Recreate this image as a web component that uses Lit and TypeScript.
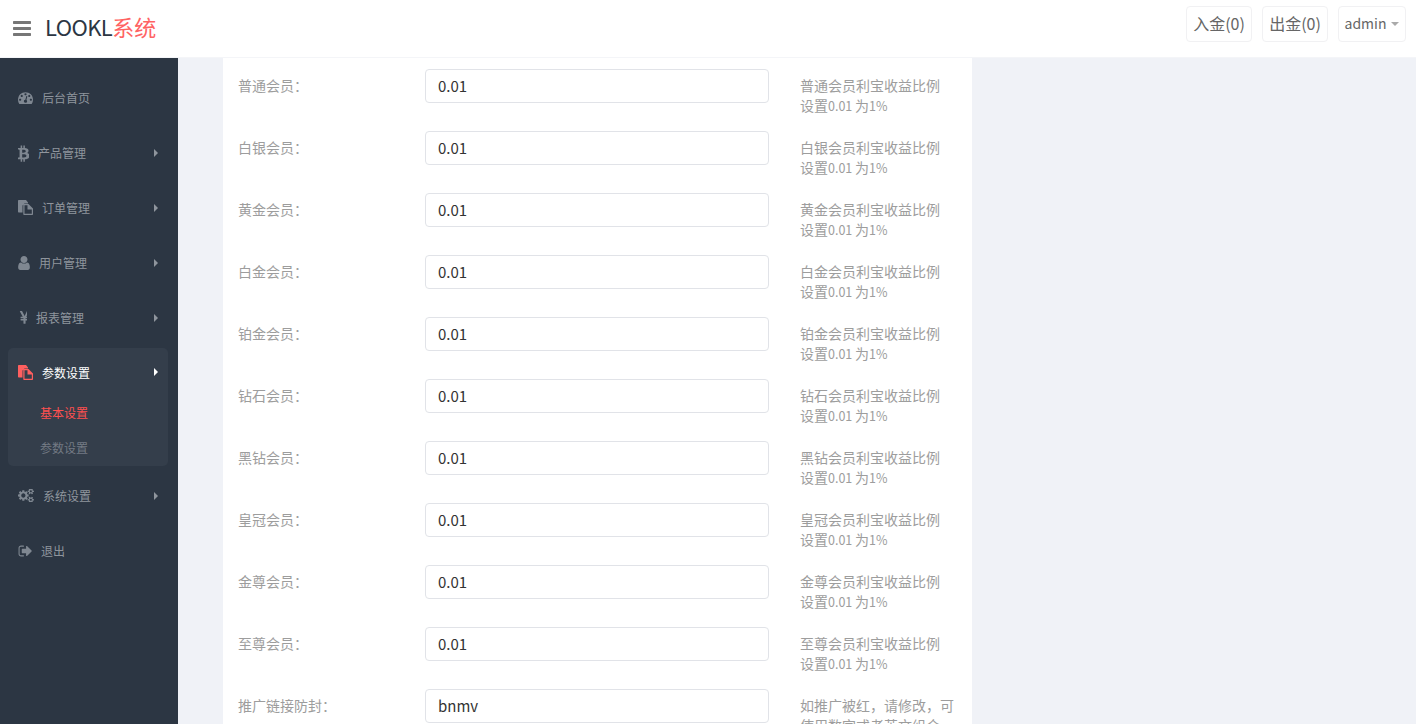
import { LitElement, html, css, svg } from 'lit';
import { customElement } from 'lit/decorators.js';
import { classMap } from 'lit/directives/class-map.js';

const icons: Record<string, { w: number; box: string; d: string }> = {
  dashboard: { w: 15, box: '0 128 1792 1536', d: 'M384 1152q0-53-37.5-90.5t-90.5-37.5-90.5 37.5-37.5 90.5 37.5 90.5 90.5 37.5 90.5-37.5 37.5-90.5zm192-448q0-53-37.5-90.5t-90.5-37.5-90.5 37.5-37.5 90.5 37.5 90.5 90.5 37.5 90.5-37.5 37.5-90.5zm428 481l101-382q6-26-7.5-48.5t-38.5-29.5-48 6.5-30 39.5l-101 382q-60 5-107 43.5t-63 98.5q-20 77 20 146t117 89 146-20 89-117q16-60-6-117t-72-91zm660-33q0-53-37.5-90.5t-90.5-37.5-90.5 37.5-37.5 90.5 37.5 90.5 90.5 37.5 90.5-37.5 37.5-90.5zm-640-640q0-53-37.5-90.5t-90.5-37.5-90.5 37.5-37.5 90.5 37.5 90.5 90.5 37.5 90.5-37.5 37.5-90.5zm448 192q0-53-37.5-90.5t-90.5-37.5-90.5 37.5-37.5 90.5 37.5 90.5 90.5 37.5 90.5-37.5 37.5-90.5zm320 448q0 261-141 483-19 29-54 29h-1402q-35 0-54-29-141-221-141-483 0-182 71-348t191-286 286-191 348-71 348 71 286 191 191 286 71 348z' },
  btc: { w: 11, box: '96 0 1120 1792', d: 'M1167 640q18 182-131 258 117 28 175 103t45 214q-7 71-32.5 125t-64.5 89-97 58.5-121.5 34.5-145.5 20v255h-154v-251q-80 0-122-1v252h-154v-255q-18 0-54-.5t-55-.5h-200l31-183h111q50 0 58-51v-402h16q-6-1-16-1v-287q-13-68-89-68h-111v-164l212 1q64 0 97-1v-252h154v247q82-2 122-2v-245h154v252q79 7 140 22.5t113 45 82.5 78 36.5 114.5zm-215 545q0-36-15-64t-37-46-57.5-30.5-65.5-18.5-74-9-69-3-64.5 1-47.5 1v338q8 0 37 .5t48 .5 53-1.5 58.5-4 57-8.5 55.5-14 47.5-21 39.5-30 24.5-40 9.5-51zm-71-476q0-33-12.5-58.5t-30.5-42-48-28-55-16.5-61.5-8-58-2.5-54 1-39.5.5v307q5 0 34.5.5t46.5 0 50-2 55-5.5 51.5-11 48.5-18.5 37-27 27-38.5 9-51z' },
  files: { w: 15, box: '0 0 15 15', d: 'M.7 0H8L10 2.500V3.500H6.500L4.500 5.500V12.500H.7A.7.7 0 0 1 0 11.800V.7A.7.7 0 0 1 .7 0zM6 4H10.500L15 8.500V14.300A.7.7 0 0 1 14.300 15H6A.7.7 0 0 1 5.300 14.300V4.700A.7.7 0 0 1 6 4zM6.500 5.200V13.800H13.800V9.500H9.500V5.200z' },
  user: { w: 12, box: '256 128 1280 1536', d: 'M1536 1399q0 109-62.5 187t-150.500 78h-854q-88 0-150.500-78t-62.500-187q0-85 8.500-160.500t31.500-152 58.500-131 94-89 134.500-34.500q131 128 313 128t313-128q76 0 134.500 34.500t94 89 58.500 131 31.500 152 8.500 160.500zm-256-887q0 159-112.500 271.500t-271.500 112.500-271.500-112.500-112.500-271.500 112.500-271.500 271.500-112.500 271.500 112.500 112.500 271.500z' },
  jpy: { w: 9, box: '175 150 1000 1400', d: 'M985 1536h-172q-13 0-22.500-9t-9.500-23v-330h-288q-13 0-22.500-9t-9.500-23v-103q0-13 9.500-22.500t22.500-9.500h288v-85h-288q-13 0-22.500-9t-9.500-23v-104q0-13 9.500-22.500t22.500-9.500h214l-321-578q-8-16 0-32 10-16 28-16h194q19 0 29 18l215 425q19 38 56 125 10-24 30.500-68t27.500-61l191-420q8-19 29-19h191q17 0 27 16 9 14 1 31l-313 579h215q13 0 22.500 9.500t9.500 22.500v104q0 14-9.500 23t-22.500 9h-290v85h290q13 0 22.500 9.500t9.500 22.500v103q0 14-9.500 23t-22.500 9h-290v330q0 13-9.500 22.500t-22.500 9.500z' },
  cogs: { w: 16, box: '0 128 1920 1536', d: 'M896 896q0-106-75-181t-181-75-181 75-75 181 75 181 181 75 181-75 75-181zm768 512q0-52-38-90t-90-38-90 38-38 90q0 53 37.500 90.500t90.500 37.500 90.500-37.500 37.500-90.500zm0-1024q0-52-38-90t-90-38-90 38-38 90q0 53 37.500 90.500t90.500 37.500 90.500-37.500 37.500-90.500zm-384 421v185q0 10-7 19.500t-16 10.500l-155 24q-11 35-32 76 34 48 90 115 7 11 7 20 0 12-7 19-23 30-82.500 89.500t-78.500 59.500q-11 0-21-7l-115-90q-37 19-77 31-11 108-23 155-7 24-30 24h-186q-11 0-20-7.500t-10-17.500l-23-153q-34-10-75-31l-118 89q-7 7-20 7-11 0-21-8-144-133-144-160 0-9 7-19 10-14 41-53t47-61q-23-44-35-82l-152-24q-10-1-17-9.500t-7-19.500v-185q0-10 7-19.500t16-10.500l155-24q11-35 32-76-34-48-90-115-7-11-7-20 0-12 7-20 22-30 82-89t79-59q11 0 21 7l115 90q34-18 77-32 11-108 23-154 7-24 30-24h186q11 0 20 7.500t10 17.500l23 153q34 10 75 31l118-89q8-7 20-7 11 0 21 8 144 133 144 160 0 8-7 19-12 16-42 54t-45 60q23 48 34 82l152 23q10 2 17 10.500t7 19.500zm640 533v140q0 16-149 31-12 27-30 52 51 113 51 138 0 4-4 7-122 71-124 71-8 0-46-47t-52-68q-20 2-30 2t-30-2q-14 21-52 68t-46 47q-2 0-124-71-4-3-4-7 0-25 51-138-18-25-30-52-149-15-149-31v-140q0-16 149-31 13-29 30-52-51-113-51-138 0-4 4-7 4-2 35-20t59-34 30-16q8 0 46 46.500t52 67.500q20-2 30-2t30 2q51-71 92-112l6-2q4 0 124 70 4 3 4 7 0 25-51 138 17 23 30 52 149 15 149 31zm0-1024v140q0 16-149 31-12 27-30 52 51 113 51 138 0 4-4 7-122 71-124 71-8 0-46-47t-52-68q-20 2-30 2t-30-2q-14 21-52 68t-46 47q-2 0-124-71-4-3-4-7 0-25 51-138-18-25-30-52-149-15-149-31v-140q0-16 149-31 13-29 30-52-51-113-51-138 0-4 4-7 4-2 35-20t59-34 30-16q8 0 46 46.500t52 67.500q20-2 30-2t30 2q51-71 92-112l6-2q4 0 124 70 4 3 4 7 0 25-51 138 17 23 30 52 149 15 149 31z' },
  signout: { w: 14, box: '0 192 1664 1408', d: 'M704 1440q0 4 1 20t.5 26.500-3 23.500-10 19.500-20.500 6.500h-320q-119 0-203.500-84.500t-84.500-203.500v-704q0-119 84.500-203.500t203.500-84.500h320q13 0 22.500 9.500t9.500 22.500q0 4 1 20t.5 26.500-3 23.500-10 19.500-20.500 6.500h-320q-66 0-113 47t-47 113v704q0 66 47 113t113 47h312l11.500 1 11.500 3 8 5.500 7 9 2 13.500zm928-544q0 26-19 45l-544 544q-19 19-45 19t-45-19-19-45v-288h-448q-26 0-45-19t-19-45v-384q0-26 19-45t45-19h448v-288q0-26 19-45t45-19 45 19l544 544q19 19 19 45z' },
};

const levels = ['普通会员', '白银会员', '黄金会员', '白金会员', '铂金会员', '钻石会员', '黑钻会员', '皇冠会员', '金尊会员', '至尊会员'];

const navTop = [
  { icon: 'dashboard', label: '后台首页', arrow: false },
  { icon: 'btc', label: '产品管理', arrow: true },
  { icon: 'files', label: '订单管理', arrow: true },
  { icon: 'user', label: '用户管理', arrow: true },
  { icon: 'jpy', label: '报表管理', arrow: true },
];
const navBottom = [
  { icon: 'cogs', label: '系统设置', arrow: true },
  { icon: 'signout', label: '退出', arrow: false },
];

@customElement('app-root')
export class AppRoot extends LitElement {
  static styles = css`
    :host {
      display: block;
      height: 724px;
      overflow: hidden;
      background: #f0f2f7;
      font-family: "Noto Sans CJK SC", "Noto Sans", sans-serif;
    }
    .top {
      height: 57px;
      background: #fff;
      border-bottom: 1px solid #f4f5f8;
      display: flex;
      align-items: center;
      padding: 0 10px 0 13px;
    }
    .bars { width: 18px; height: 15px; fill: #777; margin-right: 15px; }
    .logo { font-size: 22px; color: #2c3643; letter-spacing: -0.6px; flex: 1; margin: -5px 0 0 -1px; }
    .logo span { color: #ff6363; letter-spacing: 0; }
    .btn {
      height: 36px;
      box-sizing: border-box;
      border: 1px solid #f1f1f3;
      border-radius: 4px;
      display: flex;
      align-items: center;
      justify-content: center;
      width: 66px;
      margin-left: 10px;
      padding-bottom: 2px;
      font-size: 16px;
      color: #666;
      margin-top: -9px;
    }
    .user { width: 68px; font-size: 14px; gap: 5px; }
    .caret { border: 4px solid transparent; border-top-color: #aaa; border-bottom: 0; margin-top: 2px; }
    .body { display: flex; height: 666px; }
    .side {
      width: 178px;
      flex: none;
      box-sizing: border-box;
      background: #2c3643;
      padding: 12px 10px 0 8px;
    }
    .item {
      height: 55px;
      display: flex;
      align-items: center;
      padding: 0 10px;
      font-size: 12px;
      color: #8f959d;
    }
    .item svg.ic { fill: #7f8791; fill-rule: evenodd; margin-right: 9px; flex: none; }
    .item .name { flex: 1; }
    .arrow { border: 4px solid transparent; border-left: 4px solid #8f959d; border-right: 0; }
    .group { margin: 3px 0 2px; background: #343e4b; border-radius: 5px; height: 118px; }
    .group .item { height: 48px; box-sizing: border-box; color: #fff; }
    .group .item svg.ic { fill: #ff5f5f; }
    .group .arrow { border-left-color: #fff; }
    .sub { height: 35px; line-height: 33px; padding-left: 32px; font-size: 12px; color: #737a84; }
    .sub.on { color: #ff5050; }
    .panel {
      width: 749px;
      margin-left: 45px;
      background: #fff;
      box-sizing: border-box;
      padding: 11px 15px 0;
    }
    .row { display: flex; height: 62px; font-size: 14px; color: #9d9d9d; flex: none; }
    .label { width: 187px; flex: none; line-height: 20px; padding-top: 6px; box-sizing: border-box; }
    input {
      width: 344px;
      height: 34px;
      flex: none;
      box-sizing: border-box;
      border: 1px solid #e1e3e8;
      border-radius: 4px;
      padding: 0 12px 2px;
      font: inherit;
      font-size: 15px;
      color: #333;
      outline: none;
    }
    .hint { margin-left: 31px; width: 157px; flex: none; line-height: 20px; padding-top: 6px; box-sizing: border-box; }
    .num { font-size: 12.5px; }
  `;

  icon(name: string) {
    const i = icons[name];
    const h = Math.round((i.w * +i.box.split(' ')[3]) / +i.box.split(' ')[2]);
    return html`<svg class="ic" width=${i.w} height=${h} viewBox=${i.box}>${svg`<path d=${i.d}></path>`}</svg>`;
  }

  navItem(n: { icon: string; label: string; arrow: boolean }) {
    return html`<div class="item">
      ${this.icon(n.icon)}<span class="name">${n.label}</span>
      ${n.arrow ? html`<i class="arrow"></i>` : ''}
    </div>`;
  }

  row(label: string, value: string, hint: unknown) {
    return html`<div class="row">
      <div class="label">${label}：</div>
      <input .value=${value} />
      <div class="hint">${hint}</div>
    </div>`;
  }

  render() {
    return html`
      <div class="top">
        <svg class="bars" viewBox="128 256 1536 1280"><path d="M1664 1344v128q0 26-19 45t-45 19h-1408q-26 0-45-19t-19-45v-128q0-26 19-45t45-19h1408q26 0 45 19t19 45zm0-512v128q0 26-19 45t-45 19h-1408q-26 0-45-19t-19-45v-128q0-26 19-45t45-19h1408q26 0 45 19t19 45zm0-512v128q0 26-19 45t-45 19h-1408q-26 0-45-19t-19-45v-128q0-26 19-45t45-19h1408q26 0 45 19t19 45z"></path></svg>
        <div class="logo">LOOKL<span>系统</span></div>
        <div class="btn">入金(0)</div>
        <div class="btn">出金(0)</div>
        <div class="btn user">admin<i class="caret"></i></div>
      </div>
      <div class="body">
        <nav class="side">
          ${navTop.map((n) => this.navItem(n))}
          <div class="group">
            ${this.navItem({ icon: 'files', label: '参数设置', arrow: true })}
            <div class=${classMap({ sub: true, on: true })}>基本设置</div>
            <div class="sub">参数设置</div>
          </div>
          ${navBottom.map((n) => this.navItem(n))}
        </nav>
        <div class="panel">
          ${levels.map((l) => this.row(l, '0.01', html`${l}利宝收益比例<br />设置<span class="num">0.01 </span>为<span class="num">1%</span>`))}
          ${this.row('推广链接防封', 'bnmv', '如推广被红，请修改，可使用数字或者英文组合')}
        </div>
      </div>
    `;
  }
}
